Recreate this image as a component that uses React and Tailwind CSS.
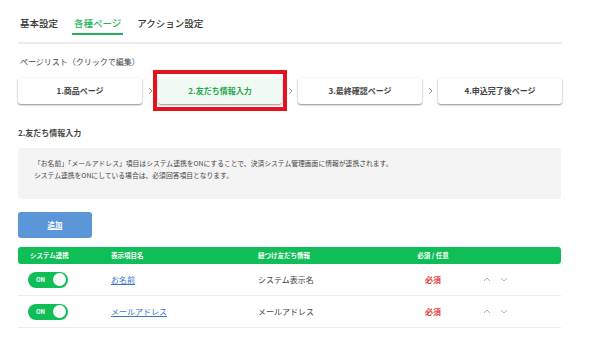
const font = { fontFamily: '"Noto Sans CJK JP", "Noto Sans", sans-serif' };

const pages = ["1.商品ページ", "2.友だち情報入力", "3.最終確認ページ", "4.申込完了後ページ"];

const rows = [
  { label: "お名前", info: "システム表示名" },
  { label: "メールアドレス", info: "メールアドレス" },
];

function Arrow() {
  return (
    <div className="w-[16px] flex items-center justify-center">
      <svg width="5" height="8" viewBox="0 0 5 8" fill="none">
        <polyline points="1,1 4,4 1,7" stroke="#9a9a9a" strokeWidth="1" />
      </svg>
    </div>
  );
}

function Toggle() {
  return (
    <div className="w-[40px] h-[16px] rounded-full bg-[#10be57] flex items-center justify-between pl-[8px] pr-[2px]">
      <span className="text-white text-[6px] font-bold leading-none">ON</span>
      <span className="w-[13px] h-[13px] rounded-full bg-white" />
    </div>
  );
}

function Chevron({ up }) {
  return (
    <svg width="8" height="5" viewBox="0 0 8 5" fill="none">
      <polyline
        points={up ? "1,4 4,1 7,4" : "1,1 4,4 7,1"}
        stroke="#a8a8a8"
        strokeWidth="0.9"
      />
    </svg>
  );
}

export default function App() {
  return (
    <div className="w-[610px] h-[347px] bg-white pl-[18px] pt-[15px] text-[#333]" style={font}>
      <div className="w-[544px]">
        {/* TABS */}
        <div className="flex gap-[12px] text-[9.5px] font-medium">
          <div className="h-[20px] px-[2px] leading-[16px] border-b-2 border-transparent">基本設定</div>
          <div className="h-[20px] px-[2px] leading-[16px] border-b-2 border-[#22b35a] text-[#22b35a]">各種ページ</div>
          <div className="h-[20px] px-[2px] leading-[16px] border-b-2 border-transparent">アクション設定</div>
        </div>
        <div className="mt-[7px] h-[2px] bg-[#ececec]" />

        {/* PAGE LIST */}
        <div className="mt-[13px] text-[8px] leading-[10px] pl-[2px] text-[#444]">ページリスト（クリックで編集）</div>
        <div className="mt-[11px] flex h-[26px]">
          {pages.map((p, i) => (
            <div key={p} className="flex">
              {i > 0 && <Arrow />}
              <div
                className={
                  "relative w-[124px] h-[26px] rounded-[3px] flex items-center justify-center text-[8px] font-bold shadow-[0_1px_2px_rgba(0,0,0,0.45)] " +
                  (i === 1 ? "bg-[#f1faf3] text-[#22a84f]" : "bg-white text-[#444]")
                }
              >
                {p}
                {i === 1 && (
                  <div className="absolute left-[-5px] right-[-5px] top-[-8px] bottom-[-7px] border-[4px] border-[#e3141d]" />
                )}
              </div>
            </div>
          ))}
        </div>

        {/* SECTION */}
        <div className="mt-[24px] text-[8px] leading-[10px] font-bold text-[#444]">2.友だち情報入力</div>
        <div className="mt-[10px] w-[543px] h-[51px] rounded-[3px] bg-[#f4f4f4] pt-[9px] pl-[16px] text-[6.8px] leading-[12px] text-[#444]">
          <div>「お名前」「メールアドレス」項目はシステム連携をONにすることで、決済システム管理画面に情報が連携されます。</div>
          <div>システム連携をONにしている場合は、必須回答項目となります。</div>
        </div>

        <button className="mt-[13px] w-[74px] h-[26px] rounded-[3px] bg-[#5b96d9] text-white text-[7.5px] font-bold underline flex items-center justify-center">
          追加
        </button>

        {/* TABLE */}
        <div className="mt-[9px] w-[543px]">
          <div className="grid grid-cols-[93px_147px_140px_70px_1fr] h-[17px] items-center bg-[#10be57] rounded-[3px] text-white text-[6.5px] font-bold">
            <div className="pl-[12px]">システム連携</div>
            <div>表示項目名</div>
            <div>紐つけ友だち情報</div>
            <div className="text-center">必須 / 任意</div>
            <div />
          </div>
          {rows.map((r) => (
            <div
              key={r.label}
              className="grid grid-cols-[93px_147px_140px_70px_1fr] h-[32px] items-center border-b border-[#ededed] text-[8px]"
            >
              <div className="pl-[10px]">
                <Toggle />
              </div>
              <div className="text-[#3d74c6] underline">{r.label}</div>
              <div className="text-[#444]">{r.info}</div>
              <div className="text-center text-[#e0403f] font-bold">必須</div>
              <div className="flex items-center gap-[9px] pl-[15px]">
                <Chevron up />
                <Chevron />
              </div>
            </div>
          ))}
        </div>
      </div>
    </div>
  );
}
